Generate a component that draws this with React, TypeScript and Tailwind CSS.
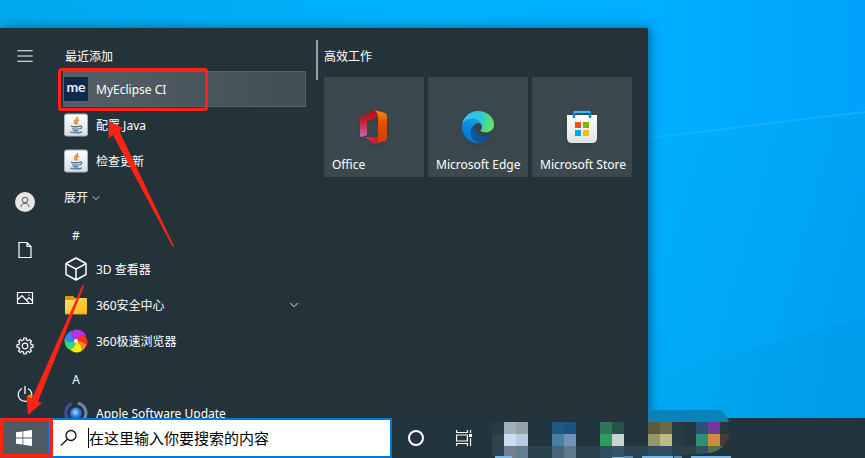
import type { ReactNode } from 'react';
import { ChevronDown, Menu } from 'lucide-react';

function Wallpaper() {
  return (
    <svg className="absolute inset-0 h-full w-full" viewBox="0 0 865 458" preserveAspectRatio="none" aria-hidden="true">
      <defs>
        <linearGradient id="sky" x1="0" y1="0" x2="1" y2="0">
          <stop offset="0" stopColor="#00a8ec" />
          <stop offset="0.4" stopColor="#00b0fa" />
          <stop offset="0.78" stopColor="#00aeff" />
          <stop offset="1" stopColor="#00a2fa" />
        </linearGradient>
        <linearGradient id="beam" x1="648" y1="240" x2="865" y2="300" gradientUnits="userSpaceOnUse">
          <stop offset="0" stopColor="#00aef9" />
          <stop offset="1" stopColor="#009ff3" />
        </linearGradient>
        <linearGradient id="floor" x1="648" y1="380" x2="865" y2="420" gradientUnits="userSpaceOnUse">
          <stop offset="0" stopColor="#00aaf2" />
          <stop offset="1" stopColor="#009aea" />
        </linearGradient>
      </defs>
      <rect width="865" height="458" fill="url(#sky)" />
      <path d="M600 144 865 112V458H600Z" fill="url(#beam)" />
      <path d="M600 392 660 376 865 317V458H600Z" fill="url(#floor)" />
      <path d="M640 139 865 112" stroke="#1cb5ff" strokeWidth="2" opacity="0.7" />
    </svg>
  );
}

function JavaIcon() {
  return (
    <svg viewBox="0 0 24 24" className="h-6 w-6">
      <defs>
        <linearGradient id="javaBg" x1="0" y1="0" x2="0" y2="1">
          <stop offset="0" stopColor="#fff" />
          <stop offset="1" stopColor="#d9dde0" />
        </linearGradient>
      </defs>
      <rect x="0.5" y="1" width="23" height="22" rx="2" fill="url(#javaBg)" stroke="#9fb4c2" />
      <path d="M13.5 4c1 2-3.500 3-3 5 .2 1 1 1.500 1.300 2.500M15 7c-2 .8-3 1.500-2.400 2.500.5.800.6 1.300-.4 2" fill="none" stroke="#e8822e" strokeWidth="1.500" />
      <path d="M7 13.200c2 .8 7 .7 9 0M8 15.500c2 .7 5.500.7 7.500 0M8.600 17.500c2 .6 4.500.6 6 0M16 13c2.500-.4 2.300 2.200-.2 3M6 19c3 1.300 9 1.300 12-.2" fill="none" stroke="#4f7591" strokeWidth="1.300" />
    </svg>
  );
}

function MyEclipseIcon() {
  return (
    <span className="flex h-6 w-6 items-center justify-center bg-[#0f294b] pb-1 font-['Lato','Noto_Sans',sans-serif] text-sm leading-none font-bold text-[#e6edf5]">
      me
    </span>
  );
}

function CubeIcon() {
  return (
    <svg viewBox="0 0 24 24" className="h-6 w-6" fill="none" stroke="#fff" strokeWidth="1.500" strokeLinejoin="round">
      <path d="M12 1 22 6.500V17.500L12 23 2 17.500V6.500ZM2.300 6.800 12 12 21.700 6.800M12 12V22.500" />
    </svg>
  );
}

function FolderIcon() {
  return (
    <svg viewBox="0 0 24 24" className="h-6 w-6">
      <defs>
        <linearGradient id="folder" x1="0" y1="0" x2="1" y2="1">
          <stop offset="0" stopColor="#ffdf72" />
          <stop offset="1" stopColor="#fbb813" />
        </linearGradient>
      </defs>
      <path d="M1 4q0-1 1-1h7l2 2v4H1Z" fill="#dd9b03" />
      <path d="M1 7h9l2-2h10q1 0 1 1v14q0 1-1 1H2q-1 0-1-1Z" fill="url(#folder)" />
      <path d="M1 21h22" stroke="#d99a17" />
    </svg>
  );
}

function PinwheelIcon() {
  return (
    <svg viewBox="0 0 24 24" className="h-6 w-6">
      <path d="M12 12Q6 8 9 1.500 13-1 19 2.500 22 5 21.500 7 15 5 12 12Z" fill="#b92ff0" />
      <path d="M12 12Q14 5 21 6.500 25 11 22.500 17 18 17 12 12Z" fill="#fb3020" />
      <path d="M12 12Q19 12 22.500 16 21 20 17 22.500 17 16 12 12Z" fill="#f98a18" />
      <path d="M12 12Q19 17 17 22.500 11 25 5.500 20.500 11 19 12 12Z" fill="#f7ec0c" />
      <path d="M12 12Q11 20 5 20.500 0 17 .5 10 5 14 12 12Z" fill="#37d77e" />
      <path d="M12 12Q4 15 .5 10 2 4 8.500 1.500 6 8 12 12Z" fill="#3c82f4" />
      <circle cx="12" cy="12" r="2" fill="#fff" />
    </svg>
  );
}

function UpdateIcon() {
  return (
    <svg viewBox="0 0 24 24" className="h-6 w-6">
      <defs>
        <radialGradient id="globe" cx="0.45" cy="0.4" r="0.7">
          <stop offset="0" stopColor="#a9dcff" />
          <stop offset="0.5" stopColor="#2f80df" />
          <stop offset="1" stopColor="#123b94" />
        </radialGradient>
      </defs>
      <path d="M8 2.500A10 10 0 0 0 5 19" fill="none" stroke="#414f9e" strokeWidth="3" />
      <path d="M14 2.200A10 10 0 0 1 19 19" fill="none" stroke="#6e86ae" strokeWidth="3" />
      <circle cx="12" cy="12.500" r="6" fill="url(#globe)" />
    </svg>
  );
}

function OfficeIcon() {
  return (
    <svg viewBox="0 0 32 36" className="h-9 w-8 drop-shadow-md">
      <defs>
        <linearGradient id="officeRight" x1="0" y1="0" x2="0" y2="1">
          <stop offset="0" stopColor="#f29100" />
          <stop offset="0.4" stopColor="#e34c00" />
          <stop offset="1" stopColor="#d83b01" />
        </linearGradient>
        <linearGradient id="officeLeft" x1="0" y1="0" x2="0" y2="1">
          <stop offset="0" stopColor="#a80f14" />
          <stop offset="0.4" stopColor="#c51e27" />
          <stop offset="1" stopColor="#c166c0" />
        </linearGradient>
        <linearGradient id="officeBottom" x1="0" y1="0" x2="1" y2="0">
          <stop offset="0" stopColor="#f0214b" />
          <stop offset="1" stopColor="#c9152e" />
        </linearGradient>
      </defs>
      <path d="M16 1 20 2V8L9 12V26L4 28Q2 28 2 26V11Q2 8 5 6.500Z" fill="url(#officeLeft)" />
      <path d="M7 28H20V33L16 35Z" fill="url(#officeBottom)" />
      <path d="M16 1 27 4Q29 5 29 7V29Q29 31 27 32L16 35 20 33V8Q20 3 16 1Z" fill="url(#officeRight)" />
    </svg>
  );
}

function EdgeIcon() {
  return (
    <svg viewBox="0 0 256 256" className="h-9 w-8 drop-shadow-md">
      <defs>
        <linearGradient id="edgeDark" x1="63" y1="177" x2="241" y2="177" gradientUnits="userSpaceOnUse">
          <stop offset="0" stopColor="#0c59a4" />
          <stop offset="1" stopColor="#114a8b" />
        </linearGradient>
        <linearGradient id="edgeMid" x1="157" y1="100" x2="46" y2="221" gradientUnits="userSpaceOnUse">
          <stop offset="0" stopColor="#1b9de2" />
          <stop offset="0.3" stopColor="#1595df" />
          <stop offset="1" stopColor="#0078d7" />
        </linearGradient>
        <radialGradient id="edgeTop" cx="26" cy="45" r="245" gradientUnits="userSpaceOnUse">
          <stop offset="0" stopColor="#35c1f1" />
          <stop offset="0.5" stopColor="#2cc8d8" />
          <stop offset="0.85" stopColor="#5cdd72" />
          <stop offset="1" stopColor="#66eb6e" />
        </radialGradient>
      </defs>
      <path fill="url(#edgeDark)" d="M231 190a94 94 0 0 1-11 5 102 102 0 0 1-36 6c-47 0-89-32-89-74 0-12 7-23 17-29-43 2-54 46-54 72 0 74 68 81 82 81 8 0 20-2 27-5l1 0a128 128 0 0 0 67-52 4 4 0 0 0-4-4Z" />
      <path fill="url(#edgeMid)" d="M106 241a79 79 0 0 1-23-21 81 81 0 0 1 29-120c3-2 9-4 16-4a33 33 0 0 1 27 13 33 33 0 0 1 6 19c0-1 25-80-81-80-44 0-81 42-81 79a130 130 0 0 0 12 56 128 128 0 0 0 156 67 76 76 0 0 1-61-9Z" />
      <path fill="url(#edgeTop)" d="M152 149c-1 1-3 3-3 6 0 3 1 5 4 7 15 10 42 9 42 9a60 60 0 0 0 31-9 62 62 0 0 0 30-53c0-23-8-38-11-44C224 24 179 0 129 0A128 128 0 0 0 0 126c1-36 37-66 80-66 4 0 24 0 42 10 16 8 25 19 31 29 6 11 7 24 7 30s-3 13-8 20Z" />
    </svg>
  );
}

function StoreIcon() {
  return (
    <svg viewBox="0 0 32 36" className="h-9 w-8 drop-shadow-md">
      <defs>
        <linearGradient id="bag" x1="0" y1="0" x2="0" y2="1">
          <stop offset="0" stopColor="#fff" />
          <stop offset="1" stopColor="#dfe2e4" />
        </linearGradient>
      </defs>
      <path d="M1 6H31V29Q31 34 26 34H6Q1 34 1 29Z" fill="url(#bag)" />
      <path d="M8 9V4Q8 3 9 3H23Q24 3 24 4V9" fill="none" stroke="#1583cc" strokeWidth="2.500" />
      <path d="M8 3H24" stroke="#35bcf2" strokeWidth="2" />
      <path d="M9 13h6v6h-6Z" fill="#f25022" />
      <path d="M17 13h6v6h-6Z" fill="#7fba00" />
      <path d="M9 21h6v6h-6Z" fill="#00a4ef" />
      <path d="M17 21h6v6h-6Z" fill="#ffb900" />
    </svg>
  );
}

const teeth = [0, 45, 90, 135, 180, 225, 270, 315];

function GearIcon() {
  return (
    <svg viewBox="0 0 18 18" className="h-[18px] w-[18px]" fill="none" stroke="#fff" strokeWidth="1.200">
      {teeth.map((angle) => (
        <path key={angle} d="M6.500 3 7.600 3 7.800 1H10.200L10.400 3 11.500 3.300" transform={`rotate(${angle} 9 9)`} />
      ))}
      <circle cx="9" cy="9" r="2.800" />
    </svg>
  );
}

const rail: { label: string; icon: ReactNode }[] = [
  {
    label: '用户',
    icon: (
      <svg viewBox="0 0 20 20" className="h-5 w-5">
        <circle cx="10" cy="10" r="10" fill="#e6e6e6" />
        <circle cx="10" cy="8" r="2.800" fill="none" stroke="#555" />
        <path d="M5.800 15c.2-5 8.200-5 8.400 0" fill="none" stroke="#555" />
      </svg>
    ),
  },
  {
    label: '文档',
    icon: (
      <svg viewBox="0 0 16 18" className="h-[18px] w-4" fill="none" stroke="#fff" strokeWidth="1.200">
        <path d="M2 1.500H10L14 5.500V16.500H2ZM10 1.500V5.500H14" />
      </svg>
    ),
  },
  {
    label: '图片',
    icon: (
      <svg viewBox="0 0 18 14" className="h-3.5 w-[18px]" fill="none" stroke="#fff" strokeWidth="1.200">
        <path d="M1.500 1.500H16.500V12.500H1.500ZM1.500 9 6 4.500 13 12M10.500 9 13 6.500 16.500 10" />
        <circle cx="13" cy="4" r="0.700" fill="#fff" stroke="none" />
      </svg>
    ),
  },
  { label: '设置', icon: <GearIcon /> },
  {
    label: '电源',
    icon: (
      <svg viewBox="0 0 18 18" className="h-[18px] w-[18px]" fill="none" stroke="#fff" strokeWidth="1.300">
        <path d="M6 3.500A6.800 6.800 0 1 0 12 3.500M9 1V9" />
      </svg>
    ),
  },
];

function AppRow({ icon, label, active, expandable }: { icon: ReactNode; label: string; active?: boolean; expandable?: boolean }) {
  return (
    <li>
      <button className={active ? 'flex h-9 w-full items-center gap-2 border border-[#56636a] bg-linear-to-r from-[#536067] to-[#414e55] text-left' : 'flex h-9 w-full items-center gap-2 border border-transparent text-left'}>
        {icon}
        <span className="flex-1 pt-0.5">{label}</span>
        {expandable && <ChevronDown className="mr-1 h-3.5 w-3.5" strokeWidth={1.5} />}
      </button>
    </li>
  );
}

const tiles = [
  { label: 'Office', icon: <OfficeIcon /> },
  { label: 'Microsoft Edge', icon: <EdgeIcon /> },
  { label: 'Microsoft Store', icon: <StoreIcon /> },
];

function StartMenu() {
  return (
    <section aria-label="开始" className="flex h-full w-[648px] max-w-full overflow-hidden bg-[#24333a] text-xs text-white shadow-[2px_0_10px_rgba(0,30,60,0.5)]">
      <nav className="flex w-12 shrink-0 flex-col justify-between pt-1 pl-0.5">
        <button aria-label="展开菜单" className="flex h-12 items-center justify-center">
          <Menu className="h-[18px] w-[22px]" strokeWidth={1.2} preserveAspectRatio="none" />
        </button>
        <div className="flex flex-col">
          {rail.map((item) => (
            <button key={item.label} aria-label={item.label} className="flex h-12 items-center justify-center">
              {item.icon}
            </button>
          ))}
        </div>
      </nav>
      <div className="ml-[15px] w-[243px] shrink-0">
        <h2 className="flex h-[43px] items-end pb-1.5 pl-0.5">最近添加</h2>
        <ul>
          <AppRow icon={<MyEclipseIcon />} label="MyEclipse CI" active />
          <AppRow icon={<JavaIcon />} label="配置 Java" />
          <AppRow icon={<JavaIcon />} label="检查更新" />
        </ul>
        <button className="flex h-9 items-center gap-0.5 pt-0.5 pl-px">
          展开
          <ChevronDown className="h-3 w-3" strokeWidth={1.5} />
        </button>
        <h3 className="flex h-9 w-[26px] items-center justify-center pt-1.5">#</h3>
        <ul>
          <AppRow icon={<CubeIcon />} label="3D 查看器" />
          <AppRow icon={<FolderIcon />} label="360安全中心" expandable />
          <AppRow icon={<PinwheelIcon />} label="360极速浏览器" />
        </ul>
        <h3 className="flex h-9 w-[26px] items-center justify-center pt-1.5">A</h3>
        <ul>
          <AppRow icon={<UpdateIcon />} label="Apple Software Update" />
        </ul>
      </div>
      <div className="mt-3 ml-2.5 h-10 w-0.5 shrink-0 bg-[#9aa2a5]" />
      <div className="ml-1.5 pt-5">
        <h2 className="leading-[18px]">高效工作</h2>
        <div className="mt-[11px] flex gap-1">
          {tiles.map((tile) => (
            <button key={tile.label} className="flex h-[100px] w-[100px] flex-col items-center justify-end bg-[#3b494f] pb-1">
              {tile.icon}
              <span className="mt-3 w-full px-2 text-left leading-4 whitespace-nowrap">{tile.label}</span>
            </button>
          ))}
        </div>
      </div>
    </section>
  );
}

// x, y, colour of every 12px block over the pinned apps
const blocks: [number, number, string][] = [
  [492, 422, '#2a3a42'], [504, 422, '#a0b1b7'], [516, 422, '#95a3a9'],
  [492, 434, '#32434a'], [504, 434, '#c7deef'], [516, 434, '#b6cce5'],
  [492, 446, '#2a4456'], [504, 446, '#747f90'], [516, 446, '#637e91'],
  [528, 446, '#29424e'], [540, 446, '#29424e'],
  [552, 422, '#1d5981'], [564, 422, '#1b5283'],
  [552, 434, '#4880a1'], [564, 434, '#7394b9'],
  [552, 446, '#486475'], [564, 446, '#5f7987'],
  [576, 446, '#29414f'], [588, 446, '#29414f'],
  [600, 422, '#2f7655'], [612, 422, '#265248'],
  [600, 434, '#2b9d64'], [612, 434, '#c9d5d0'],
  [600, 446, '#2f4c60'], [612, 446, '#355565'],
  [624, 446, '#2b4250'], [636, 446, '#2b4250'],
  [648, 422, '#5e5a37'], [660, 422, '#68694e'],
  [648, 434, '#92976d'], [660, 434, '#bfbc7f'],
  [648, 446, '#304e62'], [660, 446, '#304e62'],
  [672, 446, '#2a414d'], [684, 446, '#2a414d'],
  [672, 422, '#273b42'], [684, 422, '#24363e'],
  [672, 434, '#2a3b42'], [684, 434, '#24363e'],
  [696, 422, '#2a5074'], [708, 422, '#78379b'], [720, 422, '#29363f'],
  [696, 434, '#318c7a'], [708, 434, '#cd8c40'], [720, 434, '#493939'],
  [696, 446, '#34505c'], [708, 446, '#546c53'], [720, 446, '#546c53'],
];

function PinnedApps() {
  return (
    <svg viewBox="488 410 244 48" className="h-12 w-[244px] shrink-0 self-end" aria-hidden="true">
      <defs>
        <clipPath id="smudge">
          <path d="M488 410H720Q726 414 729 422L730 434Q725 450 710 453L672 456 640 458H504L492 455Z" />
        </clipPath>
      </defs>
      <g clipPath="url(#smudge)" shapeRendering="crispEdges">
        <path d="M648 410h84v12h-84Z" fill="#0a83b8" />
        {blocks.map(([x, y, color]) => (
          <rect key={`${x}-${y}`} x={x} y={y} width="12" height="12" fill={color} />
        ))}
      </g>
      <path d="M495 456h17v2h-17ZM612 457h21v1h-21ZM642 456h31v2h-31ZM691 456h40v2h-40Z" fill="#76b9ed" />
      <path d="M633 456h-9v2h9ZM674 456h8v2h-8Z" fill="#5a8db5" />
    </svg>
  );
}

function Taskbar() {
  return (
    <footer className="relative flex h-10 shrink-0 items-stretch bg-[#22343d]">
      <button aria-label="开始" className="flex w-12 shrink-0 items-center justify-center bg-[#4d5c64]">
        <svg viewBox="0 0 16 16" className="h-4 w-4" fill="#fff">
          <path d="M0 2.300 6.500 1.400V7.600H0ZM7.300 1.300 16 0V7.600H7.300ZM0 8.400H6.500V14.600L0 13.700ZM7.300 8.400H16V16L7.300 14.700Z" />
        </svg>
      </button>
      <label className="flex w-[344px] shrink-0 items-center border-2 border-[#0078d7] bg-white pl-2.5 text-black">
        <svg viewBox="0 0 18 18" className="h-[18px] w-[18px] shrink-0" fill="none" stroke="#111" strokeWidth="1.300">
          <circle cx="11" cy="6.500" r="5" />
          <path d="M7.300 10.200 1 16.500" />
        </svg>
        <span className="ml-2.5 h-5 w-px shrink-0 bg-black" />
        <input aria-label="搜索" placeholder="在这里输入你要搜索的内容" className="min-w-0 flex-1 text-[15px] outline-none placeholder:text-black" />
      </label>
      <button aria-label="Cortana" className="flex w-12 shrink-0 items-center justify-center">
        <span className="h-4 w-4 rounded-full border-2 border-white" />
      </button>
      <button aria-label="任务视图" className="flex w-12 shrink-0 items-center justify-center">
        <svg viewBox="0 0 16 16" className="h-4 w-4" fill="none" stroke="#fff" strokeWidth="1.200">
          <path d="M.600 0V2.500H11.400V0M.600 5H11.400V11H.600ZM.600 16V13.500H11.400V16M14.500 0V3M14.500 8V16" />
          <path d="M13 4h3v3h-3Z" fill="#fff" stroke="none" />
        </svg>
      </button>
      <PinnedApps />
    </footer>
  );
}

function Annotations() {
  return (
    <svg viewBox="0 0 220 458" className="pointer-events-none absolute bottom-0 left-0 h-[458px] w-[220px]" aria-hidden="true">
      <g fill="none" stroke="#ff2313" strokeWidth="3">
        <rect x="59.500" y="69.500" width="147" height="40" rx="2" />
        <rect x="1.500" y="419.500" width="50" height="36" rx="1" />
      </g>
      <circle cx="30" cy="397" r="2.500" fill="#f28a00" />
      <path d="M109 121 123 128 119.500 131.500 174 246 172.500 246.500 113 135 108.500 138.500ZM28 415 26.500 396 32 398.500 82.500 285 84 286 38 401.500 42 403Z" fill="#ff2313" />
    </svg>
  );
}

export default function App() {
  return (
    <div className="relative flex h-screen flex-col overflow-hidden font-['Noto_Sans','Noto_Sans_CJK_SC',sans-serif]">
      <Wallpaper />
      <main className="relative min-h-0 flex-1 pt-7">
        <StartMenu />
      </main>
      <Taskbar />
      <Annotations />
    </div>
  );
}
